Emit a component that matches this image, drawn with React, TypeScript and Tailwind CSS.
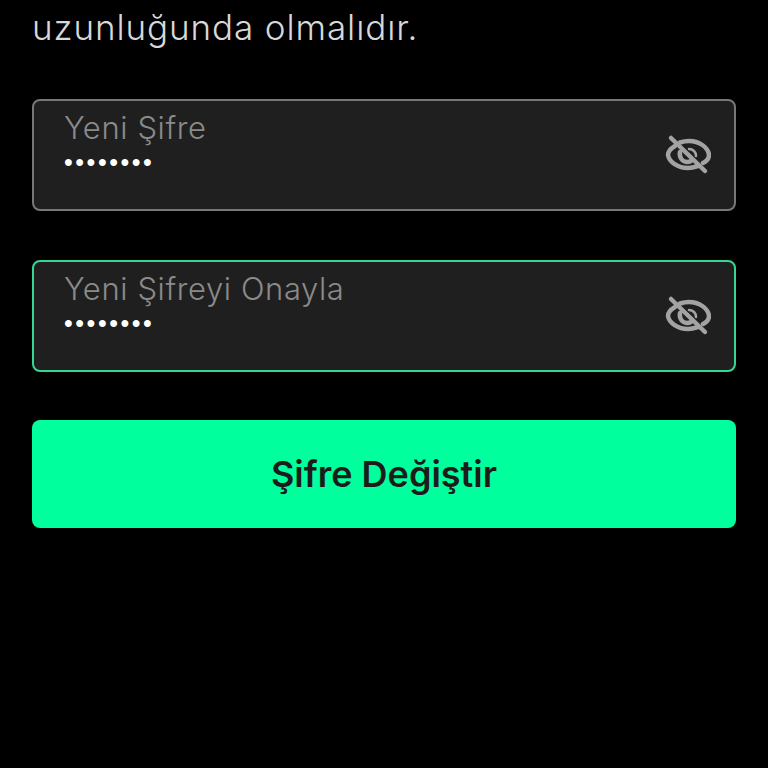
const fieldFont = { fontFamily: '"Inter", "Noto Sans", sans-serif' };

function EyeOff() {
  return (
    <svg width="46" height="42" viewBox="0 0 46 42" fill="none" stroke="#a3a3a3" strokeWidth="4.5" strokeLinecap="round" strokeLinejoin="round">
      <path d="M10 12 C5 15 3 18 3 21 C4 28 13 34 23 34 C27 34 30 33 33 32" />
      <path d="M15 8.500 C18 7.500 20 7 24 7 C34 7 43 13 44 21 C44 24 42 27 38 29" />
      <path d="M15 18 C14 23 17 28 22 28 C24 28 25 27.500 26 27" strokeWidth="4.500" />
      <path d="M24 15 C28 15 31 18 31 22" strokeWidth="2.500" />
      <path d="M6 4 L40 37" />
    </svg>
  );
}

function PasswordField({ label, focused }: { label: string; focused?: boolean }) {
  return (
    <div
      className={`flex h-[112px] items-center justify-between rounded-lg border-2 bg-[#1f1f1f] pr-[23px] pl-[30px] ${
        focused ? "border-[#36d792]" : "border-[#777777]"
      }`}
    >
      <div className="flex h-full flex-col pt-[8px]">
        <span className="text-[31px] leading-[38px] font-light tracking-[0.6px] text-[#8a8a8a]" style={fieldFont}>
          {label}
        </span>
        <span className="mt-[3px] text-[25px] leading-[24px] tracking-[2.55px] text-white" style={{ fontFamily: '"Liberation Sans", sans-serif' }}>
          ••••••••
        </span>
      </div>
      <EyeOff />
    </div>
  );
}

export default function App() {
  return (
    <div className="h-[768px] w-[768px] overflow-hidden bg-black px-8">
      <p className="h-[99px] pt-[5px] text-[35px] leading-[44px] font-light tracking-[0.9px] text-[#d8d8d8]" style={fieldFont}>
        uzunluğunda olmalıdır.
      </p>
      <div className="flex flex-col gap-[49px]">
        <PasswordField label="Yeni Şifre" />
        <PasswordField label="Yeni Şifreyi Onayla" focused />
      </div>
      <button className="mt-[48px] flex h-[108px] w-full items-center justify-center rounded-lg bg-[#00ff9d] text-[36px] font-semibold text-[#1c1c1c]" style={fieldFont}>
        Şifre Değiştir
      </button>
    </div>
  );
}
